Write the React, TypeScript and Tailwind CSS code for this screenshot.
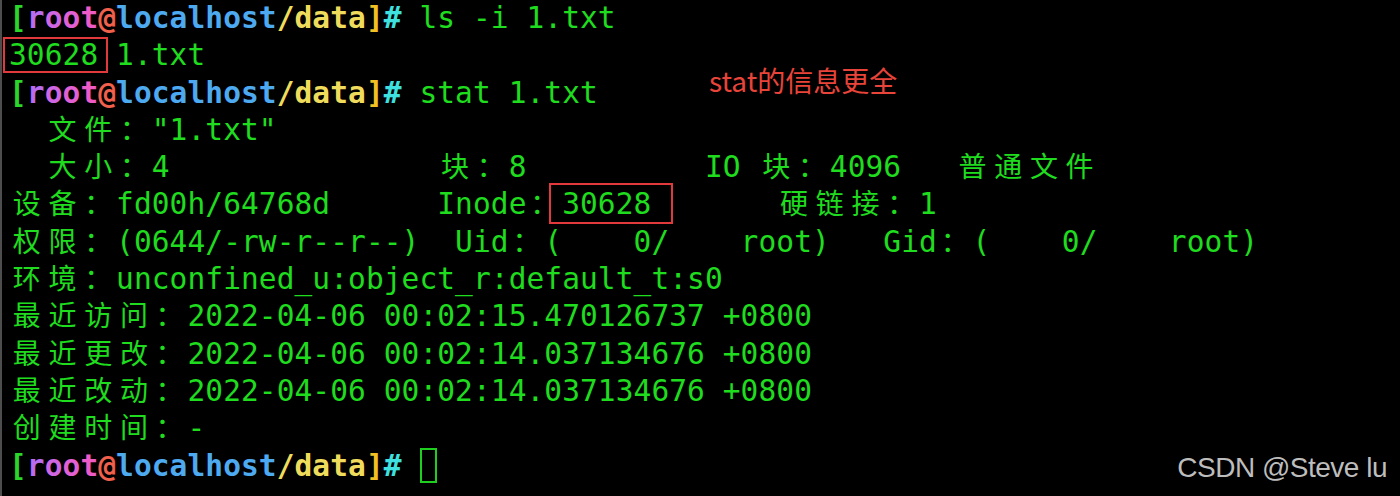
import React from "react";

type Seg = { t?: string; c?: string; b?: boolean; box?: "a" | "b"; cursor?: boolean };

const GREEN = "text-[#1fdc1f]";

function renderChars(t: string, key: string) {
  return Array.from(t).map((ch, i) => {
    const wide = ch.charCodeAt(0) > 0x2e80;
    if (wide) {
      return (
        <span
          key={key + i}
          className="inline-block w-[35.7px] shrink-0 text-center font-['Noto_Sans_CJK_SC','DejaVu_Sans_Mono',sans-serif] text-[28px] leading-[33px] font-normal"
        >
          {ch}
        </span>
      );
    }
    return (
      <span key={key + i} className="inline-block w-[17.85px] shrink-0">
        {ch === " " ? "\u00a0" : ch}
      </span>
    );
  });
}

const prompt: Seg[] = [
  { t: "[", c: "text-[#2bd62b]", b: true },
  { t: "r", c: "text-[#b96cf0]", b: true },
  { t: "o", c: "text-[#d066e2]", b: true },
  { t: "o", c: "text-[#e260d4]", b: true },
  { t: "t", c: "text-[#ef5bc6]", b: true },
  { t: "@", c: "text-[#f0604c]", b: true },
  { t: "localhost", c: "text-[#4eaaf0]", b: true },
  { t: "/data", c: "text-[#f0dc5c]", b: true },
  { t: "]", c: "text-[#f0c024]", b: true },
  { t: "#", c: "text-[#3ee0e0]", b: true },
  { t: " " },
];

const sp = (n: number) => " ".repeat(n);

const lines: Seg[][] = [
  [...prompt, { t: "ls -i 1.txt" }],
  [{ t: "30628", box: "a" }, { t: " 1.txt" }],
  [...prompt, { t: "stat 1.txt" }],
  [{ t: "  文件：\"1.txt\"" }],
  [{ t: "  大小：4" + sp(15) + "块：8" + sp(10) + "IO 块：4096" + sp(3) + "普通文件" }],
  [{ t: "设备：fd00h/64768d" + sp(6) + "Inode：" }, { t: "30628", box: "b" }, { t: sp(7) + "硬链接：1" }],
  [{ t: "权限：(0644/-rw-r--r--)  Uid：(    0/    root)   Gid：(    0/    root)" }],
  [{ t: "环境：unconfined_u:object_r:default_t:s0" }],
  [{ t: "最近访问：2022-04-06 00:02:15.470126737 +0800" }],
  [{ t: "最近更改：2022-04-06 00:02:14.037134676 +0800" }],
  [{ t: "最近改动：2022-04-06 00:02:14.037134676 +0800" }],
  [{ t: "创建时间：-" }],
  [...prompt, { cursor: true }],
];

function Line({ segs, idx }: { segs: Seg[]; idx: number }) {
  return (
    <div className="flex h-[37.3px] items-start">
      {segs.map((s, j) => {
        const key = `${idx}-${j}-`;
        const cls = `flex shrink-0 items-start ${s.c ?? GREEN} ${s.b ? "font-bold" : "font-normal"}`;
        if (s.cursor) {
          return (
            <span key={key} className="relative inline-block h-[37.3px] w-[17.85px] shrink-0">
              <span className="absolute left-[1px] right-0 top-0 bottom-[2px] border-2 border-[#1fcf1f]" />
            </span>
          );
        }
        if (s.box === "a") {
          return (
            <span key={key} className={`relative ${cls}`}>
              {renderChars(s.t ?? "", key)}
              <span className="absolute -left-[6px] -right-[10px] top-0 bottom-[2px] border-2 border-[#e23a3c]" />
            </span>
          );
        }
        if (s.box === "b") {
          return (
            <span key={key} className={`relative ${cls}`}>
              {renderChars(s.t ?? "", key)}
              <span className="absolute -left-[13px] -right-[22px] -top-[3px] bottom-0 border-2 border-[#e23a3c]" />
            </span>
          );
        }
        return (
          <span key={key} className={cls}>
            {renderChars(s.t ?? "", key)}
          </span>
        );
      })}
    </div>
  );
}

export default function App() {
  return (
    <div className="relative h-[496px] w-[1400px] overflow-hidden bg-black">
      <div className="h-full border-l-2 border-[#4d4d4d] pl-[7px] font-['DejaVu_Sans_Mono',monospace] text-[29.5px] leading-[37.3px]">
        {lines.map((segs, i) => (
          <Line key={i} segs={segs} idx={i} />
        ))}
      </div>
      <div className="absolute left-[709px] top-[66px] font-['Noto_Sans_CJK_SC',sans-serif] text-[28px] leading-none text-[#e8443a]">
        stat的信息更全
      </div>
      <div className="absolute right-[13px] top-[454px] font-['Liberation_Sans',Arial,sans-serif] text-[28px] leading-none tracking-[-0.5px] text-[#bdbdbd]">
        CSDN @Steve lu
      </div>
    </div>
  );
}
